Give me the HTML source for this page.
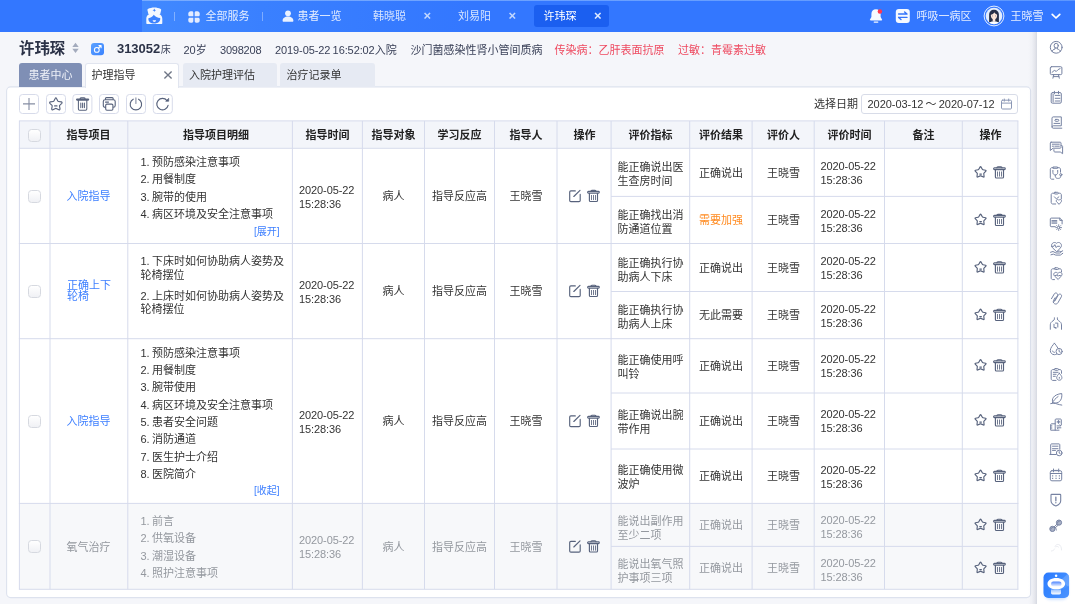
<!DOCTYPE html>
<html lang="zh-CN"><head><meta charset="utf-8"><title>护理指导</title>
<style>
*{box-sizing:border-box;margin:0;padding:0}
html,body{width:1075px;height:607px;overflow:hidden;background:#f5f6fa;font-family:"Liberation Sans","Noto Sans CJK SC",sans-serif;font-size:11px;color:#333;line-height:14px}
.a{position:absolute}
.t{position:absolute;white-space:nowrap}
.c{position:absolute;display:flex;align-items:center;justify-content:center;text-align:center}
.l{position:absolute;display:flex;align-items:center;justify-content:flex-start;text-align:left}
svg{position:absolute;overflow:visible}
.ic{fill:none;stroke:#57627c;stroke-width:1;stroke-linecap:round;stroke-linejoin:round}
.sb{fill:none;stroke:#7682a2;stroke-width:1;stroke-linecap:round;stroke-linejoin:round}
.w{color:#fff}
.hd{font-weight:bold;color:#222}
.bl{color:#3d7fff}
.gr{color:#94989f}
.cb{position:absolute;width:13px;height:13px;border:1px solid #d6d9e0;border-radius:3.5px;background:linear-gradient(#fff,#f0f1f5)}
.vl{position:absolute;width:1px;background:#d9deed}
.hl{position:absolute;height:1px;background:#d9deed}
.tb{position:absolute;width:19px;height:19px;top:95px;border:1px solid #d8dce8;border-radius:3px;background:#fff}
.it{position:absolute;left:140.5px;white-space:nowrap;line-height:14px;word-spacing:-.8px}
</style></head><body><div id="root" style="position:absolute;left:0;top:0;width:1075px;height:607px;will-change:transform">

<div class="a" style="left:0;top:0;width:1075px;height:32px;background:#3377ff"></div>
<div class="a" style="left:142px;top:0;width:933px;height:32px;background:linear-gradient(90deg,#4189ff 0,#3a80ff 120px,#3377ff 330px)"></div>
<div class="a" style="left:142px;top:0;width:933px;height:1px;background:linear-gradient(90deg,#79acff 0,#6ea3ff 300px,#5d97ff 100%)"></div>
<svg style="left:145px;top:7px" width="18" height="18" viewBox="0 0 18 18">
<path d="M2.9 1.9C4.8.900 7 .400 9.3.400s4.5.500 6.4 1.5c.400.2.600.6.500 1l-1 4H3.4L2.4 2.9c-.100-.400.1-.800.5-1z" fill="#f4f8ff"/>
<path d="M9.3 5.7c-4.7 0-8 2.4-8 6v4.5c0 .400.3.700.7.700h14.6c.400 0 .700-.300.7-.700v-4.5c0-3.6-3.3-6-8-6z" fill="#f4f8ff"/>
<path d="M3.4 11.2C5.7 10.8 7.8 9.6 8.8 7.7c1.3 1.9 3.7 3 6.4 3.4.500 3.3-2.2 5.5-5.9 5.5s-6.3-2.2-5.9-5.4z" fill="#3c82ff"/>
<path d="M7.7 13.3h3.3c0 1-.700 1.6-1.65 1.6s-1.65-.600-1.65-1.6z" fill="#f4f8ff"/>
<path d="M9.3 1.5l.550 1.25 1.25.550-1.25.550-.550 1.25-.550-1.25-1.25-.550 1.25-.550z" fill="#3c82ff"/>
</svg>
<div class="a" style="left:174px;top:12px;width:1px;height:9px;background:rgba(255,255,255,.35)"></div>
<svg style="left:188px;top:10.5px" width="12" height="12" viewBox="0 0 12 12" fill="#e3ecff">
<path d="M2.6.3h1.3c.8 0 1.4.6 1.4 1.4v3.6H1.9C1 5.3.3 4.6.3 3.7V2.6C.3 1.3 1.3.3 2.6.3z"/>
<path d="M9.4.3H8.1c-.8 0-1.4.6-1.4 1.4v3.6h3.4c.9 0 1.6-.7 1.6-1.6V2.6C11.7 1.3 10.7.3 9.4.3z"/>
<path d="M2.6 11.7h1.3c.8 0 1.4-.6 1.4-1.4V6.7H1.9C1 6.7.3 7.4.3 8.3v1.1c0 1.3 1 2.3 2.3 2.3z"/>
<path d="M9.4 11.7H8.1c-.8 0-1.4-.6-1.4-1.4V6.7h3.4c.9 0 1.6.7 1.6 1.6v1.1c0 1.3-1 2.3-2.3 2.3z"/>
</svg>
<div class="t" style="left:205.5px;top:9px;color:#e6eeff">全部服务</div>
<div class="a" style="left:262px;top:12px;width:1px;height:9px;background:rgba(255,255,255,.35)"></div>
<svg style="left:281.5px;top:10px" width="12" height="12" viewBox="0 0 12 12" fill="#eaf1ff">
<circle cx="6" cy="3.3" r="2.9"/><path d="M6 6.6c-3.2 0-5.4 1.8-5.4 4.1 0 .6.4 1 1 1h8.8c.6 0 1-.4 1-1 0-2.3-2.2-4.1-5.4-4.1z"/></svg>
<div class="t" style="left:297.5px;top:9px;color:#e6eeff">患者一览</div>
<div class="t" style="left:373px;top:9px;color:#d6e4ff">韩晓聪</div>
<div class="t" style="left:424px;top:8.5px;color:#c2d7ff;font-size:13px;font-weight:bold;margin-left:-.5px">×</div>
<div class="t" style="left:458px;top:9px;color:#d6e4ff">刘易阳</div>
<div class="t" style="left:509px;top:8.5px;color:#c2d7ff;font-size:13px;font-weight:bold;margin-left:-.5px">×</div>
<div class="a" style="left:534px;top:5px;width:75px;height:21.5px;background:#1b5ff0;border-radius:3px"></div>
<div class="t w" style="left:543.5px;top:9px">许玮琛</div>
<div class="t" style="left:594.5px;top:8.5px;color:#dfeaff;font-size:13px;font-weight:bold;margin-left:-.5px">×</div>
<svg style="left:869px;top:8px" width="14" height="15" viewBox="0 0 14 15"><g transform="translate(0,0.5)">
<path d="M7 .7c-2.8 0-4.6 2.1-4.6 4.7v3.2L1 11.1c-.3.5 0 .9.5.9h11c.5 0 .8-.4.5-.9l-1.4-2.5V5.4C11.6 2.8 9.8.7 7 .7z" fill="#f6f9ff"/>
<rect x="4.6" y="12.9" width="4.8" height="1.3" rx=".65" fill="#f6f9ff"/>
<circle cx="10.9" cy="3.1" r="2.25" fill="#ff3850"/></g></svg>
<svg style="left:895px;top:9px" width="14" height="14" viewBox="0 0 14 14"><g transform="translate(0.8,0)">
<rect x="0" y="0" width="14" height="14" rx="3" fill="#f6f9ff"/>
<path d="M2.8 5h8.4M8.8 2.9l2.4 2.1M11.2 8.4H2.8M5.2 10.5L2.8 8.4" fill="none" stroke="#3474fa" stroke-width="1.35" stroke-linecap="round" stroke-linejoin="round"/></g></svg>
<div class="t" style="left:916.5px;top:9px;color:#e6eeff">呼吸一病区</div>
<svg style="left:983px;top:5px" width="21" height="21" viewBox="0 0 21 21"><g transform="translate(0.5,0.5)">
<defs><clipPath id="av"><circle cx="10.5" cy="10.5" r="8.3"/></clipPath></defs>
<circle cx="10.5" cy="10.5" r="9.9" fill="none" stroke="#f4f8ff" stroke-width=".9"/>
<circle cx="10.5" cy="10.5" r="8.3" fill="#e2edff"/>
<g clip-path="url(#av)">
<path d="M5.6 17V9.3c0-3 2.1-5 4.9-5s4.9 2 4.9 5V17z" fill="#27304a"/>
<ellipse cx="10.5" cy="10.1" rx="3.1" ry="3.6" fill="#fde6da"/>
<path d="M7.2 9.2c1.7-.3 3-1.2 3.6-2.5.7 1.3 1.8 2.1 3 2.5V6.5l-3-1.7-3.6 1.7z" fill="#27304a"/>
<path d="M4 21c0-3.3 2.8-5.2 6.5-5.2S17 17.7 17 21z" fill="#fff"/>
<path d="M9.2 13.3h2.6v2.3l-1.3 1.2-1.3-1.2z" fill="#fde6da"/>
<circle cx="9.2" cy="10.4" r=".45" fill="#27304a"/><circle cx="11.8" cy="10.4" r=".45" fill="#27304a"/>
</g></g></svg>
<div class="t" style="left:1010.5px;top:9px;color:#e6eeff">王晓雪</div>
<svg style="left:1051px;top:13px" width="10" height="7" viewBox="0 0 10 7"><path d="M1.2 1.3L5 5l3.8-3.7" fill="none" stroke="#fff" stroke-width="1.7" stroke-linecap="round" stroke-linejoin="round"/></svg>
<div class="t" style="left:19px;top:37.5px;font-size:15.4px;line-height:22px;font-weight:bold;color:#2b3247">许玮琛</div>
<svg style="left:72px;top:42px" width="7" height="11" viewBox="0 0 7 11"><g transform="translate(0,0.8)"><path d="M3.5 0L6.7 4.3H.3z" fill="#a3abbd"/><path d="M3.5 10.2L6.7 5.9H.3z" fill="#a3abbd"/></g></svg>
<svg style="left:91px;top:43px" width="13" height="12" viewBox="0 0 13 12"><defs><linearGradient id="gd" x1="0" y1="0" x2="1" y2="1"><stop offset="0" stop-color="#5da2ff"/><stop offset="1" stop-color="#3a83ff"/></linearGradient></defs><rect width="13" height="12.2" rx="3" fill="url(#gd)"/>
<circle cx="5.8" cy="6.9" r="2.4" fill="none" stroke="#fff" stroke-width="1.05"/><path d="M7.6 5.1L10 2.7M7.9 2.6H10.1V4.8" fill="none" stroke="#fff" stroke-width="1.05" stroke-linecap="round" stroke-linejoin="round"/></svg>
<div class="t" style="left:117px;top:40px;font-size:13px;line-height:18px;font-weight:bold;color:#2b3247;letter-spacing:-.05px">313052<span style="font-size:10px;font-weight:normal;color:#3a4158;margin-left:.6px">床</span></div>
<div class="t" style="left:183.5px;top:42.7px;color:#3a4158">20岁</div>
<div class="t" style="left:220px;top:42.7px;color:#3a4158"><span style="letter-spacing:-.22px">3098208</span></div>
<div class="t" style="left:275px;top:42.7px;color:#3a4158"><span style="word-spacing:-.6px;letter-spacing:-.1px">2019-05-22 16:52:02</span>入院</div>
<div class="t" style="left:410.5px;top:42.7px;color:#3a4158">沙门菌感染性肾小管间质病</div>
<div class="t" style="left:554.5px;top:42.7px;color:#ee4a60">传染病：乙肝表面抗原</div>
<div class="t" style="left:678px;top:42.7px;color:#ee4a60">过敏：青霉素过敏</div>
<svg style="left:0;top:0" width="1075" height="607" viewBox="0 0 1075 607"><rect x="6.6" y="86.85" width="1024" height="510.75" rx="4" fill="#fff" stroke="#dde2ee" stroke-width="1.1"/></svg>
<div class="c w" style="left:19px;top:63px;width:63px;height:24px;background:#7f8fb5;border-radius:3px 3px 0 0;color:#eef1f8">患者中心</div>
<div class="a" style="left:85px;top:63px;width:94px;height:25px;background:#fff;border:1px solid #e1e5ef;border-bottom:none;border-radius:3px 3px 0 0"></div>
<div class="t" style="left:91.5px;top:68px;color:#333">护理指导</div>
<svg style="left:164px;top:71px" width="8" height="8" viewBox="0 0 8 8"><path d="M.4.4l7.2 7.2M7.6.400l-7.2 7.2" stroke="#6f7686" stroke-width="1.35" fill="none"/></svg>
<div class="l" style="left:182.5px;top:63px;width:94px;height:23.5px;background:#e6eaf3;border-radius:3px 3px 0 0;padding-left:6.5px;color:#333">入院护理评估</div>
<div class="l" style="left:280px;top:63px;width:94.5px;height:23.5px;background:#e6eaf3;border-radius:3px 3px 0 0;padding-left:6.5px;color:#333">治疗记录单</div>
<svg style="left:0;top:90px" width="200" height="28" viewBox="0 0 200 28">
<g transform="translate(19,4)"><rect x=".5" y=".5" width="19" height="19" rx="3" fill="#fff" stroke="#d7dbea"/><path d="M10 4.1v12M4 9.9h12" fill="none" stroke="#858da3" stroke-width="1.1" stroke-linecap="butt"/></g>
<g transform="translate(46,4)"><rect x=".5" y=".5" width="19" height="19" rx="3" fill="#fff" stroke="#d7dbea"/><path class="ic" d="M9.8 3.9c.3 0 .6.2.7.5l1.3 2.7c.1.2.3.4.6.4l2.9.4c.7.1 1 .9.5 1.4l-2.1 2c-.2.2-.3.4-.2.7l.5 2.9c.1.7-.6 1.2-1.2.9l-2.6-1.4c-.2-.1-.5-.1-.7 0l-2.6 1.4c-.6.3-1.3-.2-1.2-.9l.5-2.9c0-.3 0-.5-.2-.7l-2.1-2c-.5-.5-.2-1.3.5-1.4l2.9-.4c.3 0 .5-.2.6-.4l1.3-2.7c.1-.3.4-.5.7-.5zM8.6 11.9h2.4" style="stroke-width:1.15"/></g>
<g transform="translate(72.4,4)"><rect x=".5" y=".5" width="19" height="19" rx="3" fill="#fff" stroke="#d7dbea"/><path class="ic" d="M4.7 6.1h11c.4 0 .6-.3.6-.6s-.3-.6-.6-.6h-11c-.4 0-.6.3-.6.6s.3.6.6.6zM7.6 4.8c0-.6.5-1 1-1h3.2c.6 0 1 .4 1 1M6 6.3v8.7c0 .7.5 1.2 1.2 1.2h6c.7 0 1.2-.5 1.2-1.2V6.3M8.4 8.9v4.7M10.2 8.9v4.7M12 8.9v4.7" style="stroke-width:1.05"/></g>
<g transform="translate(99,4)"><rect x=".5" y=".5" width="19" height="19" rx="3" fill="#fff" stroke="#d7dbea"/><path class="ic" d="M6.4 5.6V4.7c0-.6.5-1.1 1.1-1.1h5.6c.6 0 1.1.5 1.1 1.1v.9M6.7 13.3H6.1c-1 0-1.8-.8-1.8-1.8V7.6c0-1 .8-1.8 1.8-1.8h8.3c1 0 1.8.8 1.8 1.8v3.9c0 1-.8 1.8-1.8 1.8h-.6M7.9 10.1h4.8c.7 0 1.2.5 1.2 1.2v3.7c0 .7-.5 1.2-1.2 1.2H7.9c-.7 0-1.2-.5-1.2-1.2v-3.7c0-.7.5-1.2 1.2-1.2zM6.5 8.1h3" style="stroke-width:1.1"/></g>
<g transform="translate(126,4)"><rect x=".5" y=".5" width="19" height="19" rx="3" fill="#fff" stroke="#d7dbea"/><path class="ic" d="M12.58 5.17A5.7 5.7 0 1 1 7.22 5.17" style="stroke-width:1.15"/><path d="M9.9 3.9v5.6" fill="none" stroke="#858da3" stroke-width="1.1" stroke-linecap="round"/></g>
<g transform="translate(152.8,4)"><rect x=".5" y=".5" width="19" height="19" rx="3" fill="#fff" stroke="#d7dbea"/><path class="ic" d="M14.19 6.59A5.7 5.7 0 1 0 15.28 11.29" style="stroke-width:1.15"/><path d="M15.9 4.3v3h-3z" fill="#525d78" stroke="#525d78" stroke-width=".6" stroke-linejoin="round"/></g>
</svg>
<div class="t" style="left:814px;top:96.5px;color:#333">选择日期</div>
<div class="a" style="left:861px;top:94px;width:157px;height:19.5px;border:1px solid #d8dce8;border-radius:3px;background:#fff"></div>
<div class="t" style="left:867.5px;top:96.5px;color:#333;word-spacing:-.8px;letter-spacing:-.04px">2020-03-12 ～ 2020-07-12</div>
<svg style="left:1001px;top:98px" width="11" height="11" viewBox="0 0 11 11"><g transform="translate(0,0.5)"><path d="M1.5 1.7h8c.5 0 1 .4 1 1v6.8c0 .5-.4 1-1 1h-8c-.5 0-1-.4-1-1V2.7c0-.5.4-1 1-1zM.5 4.6h10M3.3.5v2.2M7.7.5v2.2" fill="none" stroke="#8b97b5" stroke-width="1" stroke-linecap="round"/></g></svg>
<svg style="left:0;top:0" width="1075" height="607" viewBox="0 0 1075 607"><rect x="19.4" y="120.9" width="998.5" height="27.400000000000006" fill="#f3f5fa"/><rect x="19.4" y="503.4" width="998.5" height="85.89999999999998" fill="#f7f8fa"/><g stroke="#d6dbec" stroke-width="1" fill="none"><path d="M18.9 120.9H1018.4"/><path d="M18.9 148.3H1018.4"/><path d="M18.9 243.5H1018.4"/><path d="M18.9 338.7H1018.4"/><path d="M18.9 503.4H1018.4"/><path d="M18.9 589.3H1018.4"/><path d="M611.1 196.4H1017.9"/><path d="M611.1 291.5H1017.9"/><path d="M611.1 393H1017.9"/><path d="M611.1 449H1017.9"/><path d="M611.1 546.4H1017.9"/><path d="M19.4 120.9V589.3"/><path d="M50 120.9V589.3"/><path d="M127.8 120.9V589.3"/><path d="M292.4 120.9V589.3"/><path d="M362.4 120.9V589.3"/><path d="M424.5 120.9V589.3"/><path d="M494.5 120.9V589.3"/><path d="M557 120.9V589.3"/><path d="M611.1 120.9V589.3"/><path d="M689.7 120.9V589.3"/><path d="M752.1 120.9V589.3"/><path d="M814.2 120.9V589.3"/><path d="M884.5 120.9V589.3"/><path d="M962.3 120.9V589.3"/><path d="M1017.9 120.9V589.3"/></g></svg>
<div class="c hd" style="left:50px;top:122px;width:77px;height:26px">指导项目</div>
<div class="c hd" style="left:134px;top:122px;width:164px;height:26px">指导项目明细</div>
<div class="c hd" style="left:293px;top:122px;width:69px;height:26px">指导时间</div>
<div class="c hd" style="left:363px;top:122px;width:61px;height:26px">指导对象</div>
<div class="c hd" style="left:425px;top:122px;width:69px;height:26px">学习反应</div>
<div class="c hd" style="left:495px;top:122px;width:62px;height:26px">指导人</div>
<div class="c hd" style="left:558px;top:122px;width:53px;height:26px">操作</div>
<div class="c hd" style="left:612px;top:122px;width:77px;height:26px">评价指标</div>
<div class="c hd" style="left:690px;top:122px;width:62px;height:26px">评价结果</div>
<div class="c hd" style="left:753px;top:122px;width:61px;height:26px">评价人</div>
<div class="c hd" style="left:815px;top:122px;width:69px;height:26px">评价时间</div>
<div class="c hd" style="left:885px;top:122px;width:77px;height:26px">备注</div>
<div class="c hd" style="left:963px;top:122px;width:55px;height:26px">操作</div>
<div class="cb" style="left:28px;top:128.5px"></div>
<div class="cb" style="left:28px;top:189.5px"></div>
<div class="c bl" style="left:50px;top:149px;width:77px;height:94px">入院指导</div>
<div class="it" style="top:155px">1. 预防感染注意事项</div>
<div class="it" style="top:172.3px">2. 用餐制度</div>
<div class="it" style="top:189.7px">3. 腕带的使用</div>
<div class="it" style="top:207px">4. 病区环境及安全注意事项</div>
<div class="t bl" style="left:254px;top:224.5px;font-size:10px">[展开]</div>
<div class="l" style="left:299px;top:149.7px;width:62px;height:94px;letter-spacing:-.1px">2020-05-22<br>15:28:36</div>
<div class="c" style="left:363px;top:149px;width:61px;height:94px">病人</div>
<div class="c" style="left:425px;top:149px;width:69px;height:94px">指导反应高</div>
<div class="c" style="left:495px;top:149px;width:62px;height:94px">王晓雪</div>
<svg style="left:568px;top:188px" width="14" height="14" viewBox="0 0 14 14"><g transform="translate(0.5,0.8)"><path class="ic" d="M6.8 2.1H2.4c-.7 0-1.2.5-1.2 1.2v8.3c0 .7.5 1.2 1.2 1.2h8.1c.7 0 1.2-.5 1.2-1.2V5.6M5.3 7.7L11.5 1.5" style="stroke-width:1.15"/></g></svg>
<svg style="left:586px;top:188px" width="14" height="14" viewBox="0 0 14 14"><g transform="translate(0.5,0.8)"><rect class="ic" x="1.1" y="2.6" width="11.7" height="1.7" rx=".85" style="stroke-width:1.1"/><path class="ic" d="M4.4 2.5c0-.6.5-1 1-1h3.1c.6 0 1 .4 1 1M2.9 4.5v7.1c0 .6.5 1.1 1.1 1.1h5.9c.6 0 1.1-.5 1.1-1.1V4.5" style="stroke-width:1.15"/><path class="ic" d="M5 6.6v4.3M7 6.6v4.3M9 6.6v4.3" style="stroke-width:.85"/></g></svg>
<div class="l" style="left:617.5px;top:150.5px;width:72px;height:47px;line-height:14px">能正确说出医<br>生查房时间</div>
<div class="c" style="left:690px;top:149px;width:62px;height:47px"><span>正确说出</span></div>
<div class="c" style="left:753px;top:149px;width:61px;height:47px">王晓雪</div>
<div class="l" style="left:820.5px;top:149.7px;width:62px;height:47px;letter-spacing:-.1px">2020-05-22<br>15:28:36</div>
<svg style="left:973px;top:165px" width="14" height="14" viewBox="0 0 14 14"><g transform="translate(0.5,0.3)"><path class="ic" d="M6.66 1.59Q7.05 0.9 7.44 1.59L8.82 4Q9.02 4.34 9.41 4.42L12.12 4.99Q12.9 5.15 12.37 5.74L10.5 7.79Q10.24 8.09 10.28 8.48L10.58 11.24Q10.66 12.03 9.94 11.7L7.41 10.56Q7.05 10.4 6.69 10.56L4.16 11.7Q3.44 12.03 3.52 11.24L3.82 8.48Q3.86 8.09 3.6 7.79L1.73 5.74Q1.2 5.15 1.98 4.99L4.69 4.42Q5.08 4.34 5.28 4Z M6.3 8.8h1.6" style="stroke-width:1.15"/></g></svg>
<svg style="left:992px;top:165px" width="14" height="14" viewBox="0 0 14 14"><g transform="translate(0.5,0.3)"><rect class="ic" x="1.1" y="2.6" width="11.7" height="1.7" rx=".85" style="stroke-width:1.1"/><path class="ic" d="M4.4 2.5c0-.6.5-1 1-1h3.1c.6 0 1 .4 1 1M2.9 4.5v7.1c0 .6.5 1.1 1.1 1.1h5.9c.6 0 1.1-.5 1.1-1.1V4.5" style="stroke-width:1.15"/><path class="ic" d="M5 6.6v4.3M7 6.6v4.3M9 6.6v4.3" style="stroke-width:.85"/></g></svg>
<div class="l" style="left:617.5px;top:199px;width:72px;height:46px;line-height:14px">能正确找出消<br>防通道位置</div>
<div class="c" style="left:690px;top:197px;width:62px;height:46px"><span style="color:#ff8a1f">需要加强</span></div>
<div class="c" style="left:753px;top:197px;width:61px;height:46px">王晓雪</div>
<div class="l" style="left:820.5px;top:197.7px;width:62px;height:46px;letter-spacing:-.1px">2020-05-22<br>15:28:36</div>
<svg style="left:973px;top:212px" width="14" height="14" viewBox="0 0 14 14"><g transform="translate(0.5,0.8)"><path class="ic" d="M6.66 1.59Q7.05 0.9 7.44 1.59L8.82 4Q9.02 4.34 9.41 4.42L12.12 4.99Q12.9 5.15 12.37 5.74L10.5 7.79Q10.24 8.09 10.28 8.48L10.58 11.24Q10.66 12.03 9.94 11.7L7.41 10.56Q7.05 10.4 6.69 10.56L4.16 11.7Q3.44 12.03 3.52 11.24L3.82 8.48Q3.86 8.09 3.6 7.79L1.73 5.74Q1.2 5.15 1.98 4.99L4.69 4.42Q5.08 4.34 5.28 4Z M6.3 8.8h1.6" style="stroke-width:1.15"/></g></svg>
<svg style="left:992px;top:212px" width="14" height="14" viewBox="0 0 14 14"><g transform="translate(0.5,0.8)"><rect class="ic" x="1.1" y="2.6" width="11.7" height="1.7" rx=".85" style="stroke-width:1.1"/><path class="ic" d="M4.4 2.5c0-.6.5-1 1-1h3.1c.6 0 1 .4 1 1M2.9 4.5v7.1c0 .6.5 1.1 1.1 1.1h5.9c.6 0 1.1-.5 1.1-1.1V4.5" style="stroke-width:1.15"/><path class="ic" d="M5 6.6v4.3M7 6.6v4.3M9 6.6v4.3" style="stroke-width:.85"/></g></svg>
<div class="cb" style="left:28px;top:284.5px"></div>
<div class="l bl" style="left:67px;top:244px;width:60px;height:94px;line-height:11px">正确上下<br>轮椅</div>
<div class="it" style="top:254px">1. 下床时如何协助病人姿势及</div>
<div class="it" style="top:267.5px">轮椅摆位</div>
<div class="it" style="top:288.5px">2. 上床时如何协助病人姿势及</div>
<div class="it" style="top:302px">轮椅摆位</div>
<div class="l" style="left:299px;top:244.7px;width:62px;height:94px;letter-spacing:-.1px">2020-05-22<br>15:28:36</div>
<div class="c" style="left:363px;top:244px;width:61px;height:94px">病人</div>
<div class="c" style="left:425px;top:244px;width:69px;height:94px">指导反应高</div>
<div class="c" style="left:495px;top:244px;width:62px;height:94px">王晓雪</div>
<svg style="left:568px;top:283px" width="14" height="14" viewBox="0 0 14 14"><g transform="translate(0.5,0.8)"><path class="ic" d="M6.8 2.1H2.4c-.7 0-1.2.5-1.2 1.2v8.3c0 .7.5 1.2 1.2 1.2h8.1c.7 0 1.2-.5 1.2-1.2V5.6M5.3 7.7L11.5 1.5" style="stroke-width:1.15"/></g></svg>
<svg style="left:586px;top:283px" width="14" height="14" viewBox="0 0 14 14"><g transform="translate(0.5,0.8)"><rect class="ic" x="1.1" y="2.6" width="11.7" height="1.7" rx=".85" style="stroke-width:1.1"/><path class="ic" d="M4.4 2.5c0-.6.5-1 1-1h3.1c.6 0 1 .4 1 1M2.9 4.5v7.1c0 .6.5 1.1 1.1 1.1h5.9c.6 0 1.1-.5 1.1-1.1V4.5" style="stroke-width:1.15"/><path class="ic" d="M5 6.6v4.3M7 6.6v4.3M9 6.6v4.3" style="stroke-width:.85"/></g></svg>
<div class="l" style="left:617.5px;top:246.2px;width:72px;height:47px;line-height:14px">能正确执行协<br>助病人下床</div>
<div class="c" style="left:690px;top:244px;width:62px;height:47px"><span>正确说出</span></div>
<div class="c" style="left:753px;top:244px;width:61px;height:47px">王晓雪</div>
<div class="l" style="left:820.5px;top:244.7px;width:62px;height:47px;letter-spacing:-.1px">2020-05-22<br>15:28:36</div>
<svg style="left:973px;top:260px" width="14" height="14" viewBox="0 0 14 14"><g transform="translate(0.5,0.3)"><path class="ic" d="M6.66 1.59Q7.05 0.9 7.44 1.59L8.82 4Q9.02 4.34 9.41 4.42L12.12 4.99Q12.9 5.15 12.37 5.74L10.5 7.79Q10.24 8.09 10.28 8.48L10.58 11.24Q10.66 12.03 9.94 11.7L7.41 10.56Q7.05 10.4 6.69 10.56L4.16 11.7Q3.44 12.03 3.52 11.24L3.82 8.48Q3.86 8.09 3.6 7.79L1.73 5.74Q1.2 5.15 1.98 4.99L4.69 4.42Q5.08 4.34 5.28 4Z M6.3 8.8h1.6" style="stroke-width:1.15"/></g></svg>
<svg style="left:992px;top:260px" width="14" height="14" viewBox="0 0 14 14"><g transform="translate(0.5,0.3)"><rect class="ic" x="1.1" y="2.6" width="11.7" height="1.7" rx=".85" style="stroke-width:1.1"/><path class="ic" d="M4.4 2.5c0-.6.5-1 1-1h3.1c.6 0 1 .4 1 1M2.9 4.5v7.1c0 .6.5 1.1 1.1 1.1h5.9c.6 0 1.1-.5 1.1-1.1V4.5" style="stroke-width:1.15"/><path class="ic" d="M5 6.6v4.3M7 6.6v4.3M9 6.6v4.3" style="stroke-width:.85"/></g></svg>
<div class="l" style="left:617.5px;top:294.2px;width:72px;height:46px;line-height:14px">能正确执行协<br>助病人上床</div>
<div class="c" style="left:690px;top:292px;width:62px;height:46px"><span>无此需要</span></div>
<div class="c" style="left:753px;top:292px;width:61px;height:46px">王晓雪</div>
<div class="l" style="left:820.5px;top:292.7px;width:62px;height:46px;letter-spacing:-.1px">2020-05-22<br>15:28:36</div>
<svg style="left:973px;top:307px" width="14" height="14" viewBox="0 0 14 14"><g transform="translate(0.5,0.8)"><path class="ic" d="M6.66 1.59Q7.05 0.9 7.44 1.59L8.82 4Q9.02 4.34 9.41 4.42L12.12 4.99Q12.9 5.15 12.37 5.74L10.5 7.79Q10.24 8.09 10.28 8.48L10.58 11.24Q10.66 12.03 9.94 11.7L7.41 10.56Q7.05 10.4 6.69 10.56L4.16 11.7Q3.44 12.03 3.52 11.24L3.82 8.48Q3.86 8.09 3.6 7.79L1.73 5.74Q1.2 5.15 1.98 4.99L4.69 4.42Q5.08 4.34 5.28 4Z M6.3 8.8h1.6" style="stroke-width:1.15"/></g></svg>
<svg style="left:992px;top:307px" width="14" height="14" viewBox="0 0 14 14"><g transform="translate(0.5,0.8)"><rect class="ic" x="1.1" y="2.6" width="11.7" height="1.7" rx=".85" style="stroke-width:1.1"/><path class="ic" d="M4.4 2.5c0-.6.5-1 1-1h3.1c.6 0 1 .4 1 1M2.9 4.5v7.1c0 .6.5 1.1 1.1 1.1h5.9c.6 0 1.1-.5 1.1-1.1V4.5" style="stroke-width:1.15"/><path class="ic" d="M5 6.6v4.3M7 6.6v4.3M9 6.6v4.3" style="stroke-width:.85"/></g></svg>
<div class="cb" style="left:28px;top:414.5px"></div>
<div class="c bl" style="left:50px;top:339px;width:77px;height:164px">入院指导</div>
<div class="it" style="top:345.7px">1. 预防感染注意事项</div>
<div class="it" style="top:363px">2. 用餐制度</div>
<div class="it" style="top:380.3px">3. 腕带使用</div>
<div class="it" style="top:397.6px">4. 病区环境及安全注意事项</div>
<div class="it" style="top:415.2px">5. 患者安全问题</div>
<div class="it" style="top:432.2px">6. 消防通道</div>
<div class="it" style="top:449.5px">7. 医生护士介绍</div>
<div class="it" style="top:466.8px">8. 医院简介</div>
<div class="t bl" style="left:254px;top:483.5px;font-size:10px">[收起]</div>
<div class="l" style="left:299px;top:339.7px;width:62px;height:164px;letter-spacing:-.1px">2020-05-22<br>15:28:36</div>
<div class="c" style="left:363px;top:339px;width:61px;height:164px">病人</div>
<div class="c" style="left:425px;top:339px;width:69px;height:164px">指导反应高</div>
<div class="c" style="left:495px;top:339px;width:62px;height:164px">王晓雪</div>
<svg style="left:568px;top:413px" width="14" height="14" viewBox="0 0 14 14"><g transform="translate(0.5,0.8)"><path class="ic" d="M6.8 2.1H2.4c-.7 0-1.2.5-1.2 1.2v8.3c0 .7.5 1.2 1.2 1.2h8.1c.7 0 1.2-.5 1.2-1.2V5.6M5.3 7.7L11.5 1.5" style="stroke-width:1.15"/></g></svg>
<svg style="left:586px;top:413px" width="14" height="14" viewBox="0 0 14 14"><g transform="translate(0.5,0.8)"><rect class="ic" x="1.1" y="2.6" width="11.7" height="1.7" rx=".85" style="stroke-width:1.1"/><path class="ic" d="M4.4 2.5c0-.6.5-1 1-1h3.1c.6 0 1 .4 1 1M2.9 4.5v7.1c0 .6.5 1.1 1.1 1.1h5.9c.6 0 1.1-.5 1.1-1.1V4.5" style="stroke-width:1.15"/><path class="ic" d="M5 6.6v4.3M7 6.6v4.3M9 6.6v4.3" style="stroke-width:.85"/></g></svg>
<div class="l" style="left:617.5px;top:340.5px;width:72px;height:53px;line-height:14px">能正确使用呼<br>叫铃</div>
<div class="c" style="left:690px;top:339px;width:62px;height:53px"><span>正确说出</span></div>
<div class="c" style="left:753px;top:339px;width:61px;height:53px">王晓雪</div>
<div class="l" style="left:820.5px;top:339.7px;width:62px;height:53px;letter-spacing:-.1px">2020-05-22<br>15:28:36</div>
<svg style="left:973px;top:358px" width="14" height="14" viewBox="0 0 14 14"><g transform="translate(0.5,0.3)"><path class="ic" d="M6.66 1.59Q7.05 0.9 7.44 1.59L8.82 4Q9.02 4.34 9.41 4.42L12.12 4.99Q12.9 5.15 12.37 5.74L10.5 7.79Q10.24 8.09 10.28 8.48L10.58 11.24Q10.66 12.03 9.94 11.7L7.41 10.56Q7.05 10.4 6.69 10.56L4.16 11.7Q3.44 12.03 3.52 11.24L3.82 8.48Q3.86 8.09 3.6 7.79L1.73 5.74Q1.2 5.15 1.98 4.99L4.69 4.42Q5.08 4.34 5.28 4Z M6.3 8.8h1.6" style="stroke-width:1.15"/></g></svg>
<svg style="left:992px;top:358px" width="14" height="14" viewBox="0 0 14 14"><g transform="translate(0.5,0.3)"><rect class="ic" x="1.1" y="2.6" width="11.7" height="1.7" rx=".85" style="stroke-width:1.1"/><path class="ic" d="M4.4 2.5c0-.6.5-1 1-1h3.1c.6 0 1 .4 1 1M2.9 4.5v7.1c0 .6.5 1.1 1.1 1.1h5.9c.6 0 1.1-.5 1.1-1.1V4.5" style="stroke-width:1.15"/><path class="ic" d="M5 6.6v4.3M7 6.6v4.3M9 6.6v4.3" style="stroke-width:.85"/></g></svg>
<div class="l" style="left:617.5px;top:394.2px;width:72px;height:55px;line-height:14px">能正确说出腕<br>带作用</div>
<div class="c" style="left:690px;top:393px;width:62px;height:55px"><span>正确说出</span></div>
<div class="c" style="left:753px;top:393px;width:61px;height:55px">王晓雪</div>
<div class="l" style="left:820.5px;top:393.7px;width:62px;height:55px;letter-spacing:-.1px">2020-05-22<br>15:28:36</div>
<svg style="left:973px;top:413px" width="14" height="14" viewBox="0 0 14 14"><g transform="translate(0.5,0.3)"><path class="ic" d="M6.66 1.59Q7.05 0.9 7.44 1.59L8.82 4Q9.02 4.34 9.41 4.42L12.12 4.99Q12.9 5.15 12.37 5.74L10.5 7.79Q10.24 8.09 10.28 8.48L10.58 11.24Q10.66 12.03 9.94 11.7L7.41 10.56Q7.05 10.4 6.69 10.56L4.16 11.7Q3.44 12.03 3.52 11.24L3.82 8.48Q3.86 8.09 3.6 7.79L1.73 5.74Q1.2 5.15 1.98 4.99L4.69 4.42Q5.08 4.34 5.28 4Z M6.3 8.8h1.6" style="stroke-width:1.15"/></g></svg>
<svg style="left:992px;top:413px" width="14" height="14" viewBox="0 0 14 14"><g transform="translate(0.5,0.3)"><rect class="ic" x="1.1" y="2.6" width="11.7" height="1.7" rx=".85" style="stroke-width:1.1"/><path class="ic" d="M4.4 2.5c0-.6.5-1 1-1h3.1c.6 0 1 .4 1 1M2.9 4.5v7.1c0 .6.5 1.1 1.1 1.1h5.9c.6 0 1.1-.5 1.1-1.1V4.5" style="stroke-width:1.15"/><path class="ic" d="M5 6.6v4.3M7 6.6v4.3M9 6.6v4.3" style="stroke-width:.85"/></g></svg>
<div class="l" style="left:617.5px;top:450px;width:72px;height:54px;line-height:14px">能正确使用微<br>波炉</div>
<div class="c" style="left:690px;top:449px;width:62px;height:54px"><span>正确说出</span></div>
<div class="c" style="left:753px;top:449px;width:61px;height:54px">王晓雪</div>
<div class="l" style="left:820.5px;top:449.7px;width:62px;height:54px;letter-spacing:-.1px">2020-05-22<br>15:28:36</div>
<svg style="left:973px;top:468px" width="14" height="14" viewBox="0 0 14 14"><g transform="translate(0.5,0.8)"><path class="ic" d="M6.66 1.59Q7.05 0.9 7.44 1.59L8.82 4Q9.02 4.34 9.41 4.42L12.12 4.99Q12.9 5.15 12.37 5.74L10.5 7.79Q10.24 8.09 10.28 8.48L10.58 11.24Q10.66 12.03 9.94 11.7L7.41 10.56Q7.05 10.4 6.69 10.56L4.16 11.7Q3.44 12.03 3.52 11.24L3.82 8.48Q3.86 8.09 3.6 7.79L1.73 5.74Q1.2 5.15 1.98 4.99L4.69 4.42Q5.08 4.34 5.28 4Z M6.3 8.8h1.6" style="stroke-width:1.15"/></g></svg>
<svg style="left:992px;top:468px" width="14" height="14" viewBox="0 0 14 14"><g transform="translate(0.5,0.8)"><rect class="ic" x="1.1" y="2.6" width="11.7" height="1.7" rx=".85" style="stroke-width:1.1"/><path class="ic" d="M4.4 2.5c0-.6.5-1 1-1h3.1c.6 0 1 .4 1 1M2.9 4.5v7.1c0 .6.5 1.1 1.1 1.1h5.9c.6 0 1.1-.5 1.1-1.1V4.5" style="stroke-width:1.15"/><path class="ic" d="M5 6.6v4.3M7 6.6v4.3M9 6.6v4.3" style="stroke-width:.85"/></g></svg>
<div class="cb" style="left:28px;top:540px"></div>
<div class="c gr" style="left:50px;top:504px;width:77px;height:85px">氧气治疗</div>
<div class="it gr" style="top:514px">1. 前言</div>
<div class="it gr" style="top:531.2px">2. 供氧设备</div>
<div class="it gr" style="top:548.5px">3. 潮湿设备</div>
<div class="it gr" style="top:565.8px">4. 照护注意事项</div>
<div class="l gr" style="left:299px;top:504.7px;width:62px;height:85px;letter-spacing:-.1px">2020-05-22<br>15:28:36</div>
<div class="c gr" style="left:363px;top:504px;width:61px;height:85px">病人</div>
<div class="c gr" style="left:425px;top:504px;width:69px;height:85px">指导反应高</div>
<div class="c gr" style="left:495px;top:504px;width:62px;height:85px">王晓雪</div>
<svg style="left:568px;top:539px" width="14" height="14" viewBox="0 0 14 14"><g transform="translate(0.5,0.3)"><path class="ic" d="M6.8 2.1H2.4c-.7 0-1.2.5-1.2 1.2v8.3c0 .7.5 1.2 1.2 1.2h8.1c.7 0 1.2-.5 1.2-1.2V5.6M5.3 7.7L11.5 1.5" style="stroke-width:1.15"/></g></svg>
<svg style="left:586px;top:539px" width="14" height="14" viewBox="0 0 14 14"><g transform="translate(0.5,0.3)"><rect class="ic" x="1.1" y="2.6" width="11.7" height="1.7" rx=".85" style="stroke-width:1.1"/><path class="ic" d="M4.4 2.5c0-.6.5-1 1-1h3.1c.6 0 1 .4 1 1M2.9 4.5v7.1c0 .6.5 1.1 1.1 1.1h5.9c.6 0 1.1-.5 1.1-1.1V4.5" style="stroke-width:1.15"/><path class="ic" d="M5 6.6v4.3M7 6.6v4.3M9 6.6v4.3" style="stroke-width:.85"/></g></svg>
<div class="l gr" style="left:617.5px;top:506.8px;width:72px;height:42px;line-height:14px">能说出副作用<br>至少二项</div>
<div class="c gr" style="left:690px;top:504px;width:62px;height:42px"><span>正确说出</span></div>
<div class="c gr" style="left:753px;top:504px;width:61px;height:42px">王晓雪</div>
<div class="l gr" style="left:820.5px;top:506.2px;width:62px;height:42px;letter-spacing:-.1px">2020-05-22<br>15:28:36</div>
<svg style="left:973px;top:517px" width="14" height="14" viewBox="0 0 14 14"><g transform="translate(0.5,0.8)"><path class="ic" d="M6.66 1.59Q7.05 0.9 7.44 1.59L8.82 4Q9.02 4.34 9.41 4.42L12.12 4.99Q12.9 5.15 12.37 5.74L10.5 7.79Q10.24 8.09 10.28 8.48L10.58 11.24Q10.66 12.03 9.94 11.7L7.41 10.56Q7.05 10.4 6.69 10.56L4.16 11.7Q3.44 12.03 3.52 11.24L3.82 8.48Q3.86 8.09 3.6 7.79L1.73 5.74Q1.2 5.15 1.98 4.99L4.69 4.42Q5.08 4.34 5.28 4Z M6.3 8.8h1.6" style="stroke-width:1.15"/></g></svg>
<svg style="left:992px;top:517px" width="14" height="14" viewBox="0 0 14 14"><g transform="translate(0.5,0.8)"><rect class="ic" x="1.1" y="2.6" width="11.7" height="1.7" rx=".85" style="stroke-width:1.1"/><path class="ic" d="M4.4 2.5c0-.6.5-1 1-1h3.1c.6 0 1 .4 1 1M2.9 4.5v7.1c0 .6.5 1.1 1.1 1.1h5.9c.6 0 1.1-.5 1.1-1.1V4.5" style="stroke-width:1.15"/><path class="ic" d="M5 6.6v4.3M7 6.6v4.3M9 6.6v4.3" style="stroke-width:.85"/></g></svg>
<div class="l gr" style="left:617.5px;top:550.2px;width:72px;height:42px;line-height:14px">能说出氧气照<br>护事项三项</div>
<div class="c gr" style="left:690px;top:547px;width:62px;height:42px"><span>正确说出</span></div>
<div class="c gr" style="left:753px;top:547px;width:61px;height:42px">王晓雪</div>
<div class="l gr" style="left:820.5px;top:549.2px;width:62px;height:42px;letter-spacing:-.1px">2020-05-22<br>15:28:36</div>
<svg style="left:973px;top:560px" width="14" height="14" viewBox="0 0 14 14"><g transform="translate(0.5,0.8)"><path class="ic" d="M6.66 1.59Q7.05 0.9 7.44 1.59L8.82 4Q9.02 4.34 9.41 4.42L12.12 4.99Q12.9 5.15 12.37 5.74L10.5 7.79Q10.24 8.09 10.28 8.48L10.58 11.24Q10.66 12.03 9.94 11.7L7.41 10.56Q7.05 10.4 6.69 10.56L4.16 11.7Q3.44 12.03 3.52 11.24L3.82 8.48Q3.86 8.09 3.6 7.79L1.73 5.74Q1.2 5.15 1.98 4.99L4.69 4.42Q5.08 4.34 5.28 4Z M6.3 8.8h1.6" style="stroke-width:1.15"/></g></svg>
<svg style="left:992px;top:560px" width="14" height="14" viewBox="0 0 14 14"><g transform="translate(0.5,0.8)"><rect class="ic" x="1.1" y="2.6" width="11.7" height="1.7" rx=".85" style="stroke-width:1.1"/><path class="ic" d="M4.4 2.5c0-.6.5-1 1-1h3.1c.6 0 1 .4 1 1M2.9 4.5v7.1c0 .6.5 1.1 1.1 1.1h5.9c.6 0 1.1-.5 1.1-1.1V4.5" style="stroke-width:1.15"/><path class="ic" d="M5 6.6v4.3M7 6.6v4.3M9 6.6v4.3" style="stroke-width:.85"/></g></svg>
<div class="a" style="left:1028px;top:32px;width:9px;height:575px;background:linear-gradient(90deg,rgba(90,100,125,0) 0,rgba(90,100,125,.03) 40%,rgba(90,100,125,.1) 75%,rgba(90,100,125,.2) 100%)"></div>
<div class="a" style="left:1037px;top:32px;width:38px;height:575px;background:#fff"></div>
<svg style="left:1049px;top:40px" width="14" height="14" viewBox="0 0 14 14"><g transform="translate(0.5,0.2)"><circle class="sb" cx="6.7" cy="7.1" r="5.9"/><ellipse class="sb" cx="6.7" cy="5.5" rx="2.1" ry="2.4"/><path class="sb" d="M2.5 11.2c.2-1.3 1.4-1.9 3.1-2.4v-1M10.9 11.2c-.2-1.3-1.4-1.9-3.1-2.4v-1"/></g></svg>
<svg style="left:1049px;top:65px" width="14" height="14" viewBox="0 0 14 14"><g transform="translate(0.5,0.4)"><rect class="sb" x=".8" y="1.3" width="11.6" height="7.9" rx="1.2"/><path class="sb" d="M2.5 7l2.3-2 2 1 1.8-1.8 2-1M4.3 9.3l-.9 3.5M8.9 9.3l.9 3.5M3.8 11.2h5.6"/></g></svg>
<svg style="left:1049px;top:90px" width="14" height="14" viewBox="0 0 14 14"><g transform="translate(0.5,0.6)"><rect class="sb" x="1.7" y="2" width="10.1" height="10.6" rx="1.3"/><path class="sb" d="M4.9.7v2.5M9 .7v2.5M3.6 3.6v7.8M5.7 4.8h4.7M5.7 7.7h4.7M5.7 10.4h4.7"/></g></svg>
<svg style="left:1049px;top:115px" width="14" height="14" viewBox="0 0 14 14"><g transform="translate(0.5,0.8)"><path class="sb" d="M2.5 11.2V2.3c0-.7.5-1.2 1.2-1.2h8.1v8.9H3.7c-.7 0-1.2.5-1.2 1.2s.5 1.2 1.2 1.2h8.6M4.5 7.6h5.7"/><rect class="sb" x="5.4" y="3.6" width="3.9" height="1.9" rx=".95"/></g></svg>
<svg style="left:1049px;top:141px" width="14" height="14" viewBox="0 0 14 14"><g transform="translate(0.5,0)"><path class="sb" d="M1.6 1.2h9.1c.5 0 .8.4.8.8v4.4c0 .5-.4.8-.8.8H3.6L.8 9.5V2c0-.5.4-.8.8-.8zM2.8 3.2h7M2.8 5.2h1.2M5.3 5.2h4.5M4.4 8.6v1.5c0 .5.4.9.9.9h5.5l2.3 1.7V5.4c0-.5-.4-.9-.9-.9h-.6"/></g></svg>
<svg style="left:1049px;top:166px" width="14" height="14" viewBox="0 0 14 14"><g transform="translate(0.5,0.2)"><path class="sb" d="M3.6 1.5H2.3c-.8 0-1.5.7-1.5 1.5v8.5c0 .8.7 1.5 1.5 1.5h2M8.2 1.5h1.3c.8 0 1.5.7 1.5 1.5v3M3.8.8h4.2v1.3H3.8zM3.4 4.2v2.2c0 1.3 1.1 2.4 2.4 2.4s2.4-1.1 2.4-2.4V4.2M5.8 8.8v1.2c0 1.2 1 2.2 2.2 2.2h1.1c1.2 0 2.2-1 2.2-2.2v-.3"/><circle class="sb" cx="11.3" cy="8.5" r="1.1"/></g></svg>
<svg style="left:1049px;top:191px" width="14" height="14" viewBox="0 0 14 14"><g transform="translate(0.5,0.4)"><path class="sb" d="M4.5 1.8H3.2c-.8 0-1.5.7-1.5 1.5v7.8c0 .8.7 1.5 1.5 1.5h3M9 1.8h1.3c.8 0 1.5.7 1.5 1.5v4.3M4.9 5.4l2 2.1 2.5-2.1M9.4 12.7L7.2 10.6c-.6-.6-.6-1.5 0-2.1.5-.5 1.4-.5 1.9 0l.3.3.3-.3c.5-.5 1.4-.5 1.9 0 .6.6.6 1.5 0 2.1z"/><rect class="sb" x="4.7" y=".9" width="4.1" height="1.7" rx=".85"/></g></svg>
<svg style="left:1049px;top:216px" width="14" height="14" viewBox="0 0 14 14"><g transform="translate(0.5,0.6)"><path class="sb" d="M5.8 10.1H1.6c-.4 0-.8-.3-.8-.8v-7c0-.4.3-.8.8-.8h8.7l2.3 2.3v3.5M10.3 1.5v2.3h2.3M2.4 4h4.9M2.4 5.3h4.9M2.4 6.6h4.9"/><circle class="sb" cx="9.2" cy="11" r="1.3"/><path class="sb" d="M11.3 11L12.1 11M10.68 12.48L11.25 13.05M9.2 13.1L9.2 13.9M7.72 12.48L7.15 13.05M7.1 11L6.3 11M7.72 9.52L7.15 8.95M9.2 8.9L9.2 8.1M10.68 9.52L11.25 8.95" style="stroke-width:.9"/></g></svg>
<svg style="left:1049px;top:241px" width="14" height="14" viewBox="0 0 14 14"><g transform="translate(0.5,0.8)"><path class="sb" d="M7 9.8L3 6c-1.3-1.3-1.3-3.3 0-4.5 1.1-1.1 2.9-1.1 4 0 1.1-1.1 2.9-1.1 4 0 1.3 1.2 1.3 3.2 0 4.5zM2 4.5h2.3l1-1.7 1.4 3 1-1.3H10M1 10.5l2.5-.8 3 1.5h3.8c.6 0 1-.4 1-.9s-.4-.9-1-.9H8M11.3 10l1.9-1M1.5 13l2.3-.7 2.5 1h4.5l2.5-1.8"/></g></svg>
<svg style="left:1049px;top:267px" width="14" height="14" viewBox="0 0 14 14"><g transform="translate(0.5,0)"><path class="sb" d="M4.8 1.8H3.2c-.8 0-1.5.7-1.5 1.5v7.8c0 .8.7 1.5 1.5 1.5h1.8M9.1 1.8h1.4c.8 0 1.5.7 1.5 1.5v1.7M8.4 12.2L4.9 8.9c-.9-.9-.9-2.2 0-3 .8-.8 2.1-.8 2.9 0l.6.5.6-.5c.8-.8 2.1-.8 2.9 0 .9.8.9 2.1 0 3zM5.6 8.5h1.4l.7-1.1.9 1.9.7-.8h1.6"/><rect class="sb" x="4.9" y=".8" width="4.1" height="1.7" rx=".85"/></g></svg>
<svg style="left:1049px;top:292px" width="14" height="14" viewBox="0 0 14 14"><g transform="translate(0.5,0.2)"><path class="sb" d="M2 6.5l2.8-4.8c.5-.9 1.6-1.2 2.4-.7.9.5 1.1 1.5.7 2.4l-4 7M5.5 8.5l3.3-5.7c.5-.9 1.6-1.2 2.4-.7.9.5 1.1 1.5.7 2.4l-3.5 6.1c-.7 1.2-2.2 1.6-3.4.9s-1.6-2.2-.9-3.4l1.5-2.6"/></g></svg>
<svg style="left:1049px;top:317px" width="14" height="14" viewBox="0 0 14 14"><g transform="translate(0.5,0.4)"><path class="sb" d="M4.9.4v1.1c0 .9-.5 1.5-1.3 1.9C1.9 4.3.8 5.6.8 7.5v4.4M7.9.4v1.1c0 .9.5 1.5 1.3 1.9 1.7.9 2.8 2.2 2.8 4.1v4.4M4.5 6.9v3.3h1.9M6 5.7h2.3v4M6.4 10.2v.9"/></g></svg>
<svg style="left:1049px;top:342px" width="14" height="14" viewBox="0 0 14 14"><g transform="translate(0.5,0.6)"><path class="sb" d="M4.9.6C3.2 2.8.8 5.2.8 8c0 2.3 1.8 4.1 4.1 4.1.9 0 1.7-.3 2.3-.7M4.9.6c1.1 1.4 2.4 2.8 3.3 4.5M3 8.4c.3.9 1 1.4 1.9 1.4"/><circle class="sb" cx="9.6" cy="8.9" r="3.1"/><path class="sb" d="M9.6 7.2v1.8l1.2.6"/></g></svg>
<svg style="left:1049px;top:367px" width="14" height="14" viewBox="0 0 14 14"><g transform="translate(0.5,0.8)"><path class="sb" d="M4.8 1.8H3.2c-.8 0-1.5.7-1.5 1.5v7.8c0 .8.7 1.5 1.5 1.5h3.3M9.1 1.8h1.4c.8 0 1.5.7 1.5 1.5v2.2M3.8 4.5h4.8M3.8 6.5h2.8M3.8 8.5h2M9.8 5.5c-1.1 1.4-2.6 2.8-2.6 4.3 0 1.5 1.1 2.6 2.6 2.6s2.6-1.1 2.6-2.6c0-1.5-1.5-2.9-2.6-4.3zM9.8 9.5v1"/><rect class="sb" x="4.9" y=".8" width="4.1" height="1.7" rx=".85"/></g></svg>
<svg style="left:1049px;top:393px" width="14" height="14" viewBox="0 0 14 14"><g transform="translate(0.5,0)"><path class="sb" d="M3.3 9.6C1.8 6.3 3.6 1.6 12.2.5c.8 5-1.6 9.7-6.6 9.5-.9 0-1.7-.2-2.3-.4zM2.6 10.2c1.5-2.7 3.4-4.9 6-6.7M1.2 10.6c2.2-.6 4.2-.4 6.2.3 1.6.6 3.3 1 4.9 1.2"/></g></svg>
<svg style="left:1049px;top:418px" width="14" height="14" viewBox="0 0 14 14"><g transform="translate(0.5,0.2)"><path class="sb" d="M5.7 12V1.6c0-.4.3-.8.8-.8h4.5c.4 0 .8.3.8.8v5.2M5.7 5.6H2c-.4 0-.8.3-.8.8V12h8.3M1.2 7.7h1.2M1.2 9.8h1.2M7.5 7.7h3.9l-1-1M11.4 9.6H7.5l1 1"/><path class="sb" d="M7.7 3.7h2.6M9 2.4v2.6" style="stroke-width:1.3"/></g></svg>
<svg style="left:1049px;top:443px" width="14" height="14" viewBox="0 0 14 14"><g transform="translate(0.5,0.4)"><path class="sb" d="M10.3 5.8V1.3c0-.4-.3-.8-.8-.8H2c-.4 0-.8.3-.8.8v9.8M.3 11.1h6.3M3 2.8h5.5M3 5.3h5.5M3 7h3"/><circle class="sb" cx="9.7" cy="9.6" r="2.8"/><path class="sb" d="M9.7 8.2v1.5l1 .5"/></g></svg>
<svg style="left:1049px;top:468px" width="14" height="14" viewBox="0 0 14 14"><g transform="translate(0.5,0.6)"><rect class="sb" x=".8" y="2.1" width="11.4" height="10.1" rx="1.6"/><path class="sb" d="M4 .4v2.8M9.2 .4v2.8M.8 4.9h11.4M5.3 1.8h2.6"/><path class="sb" d="M2.6 7.3h1.1M6 7.3h1.1M9.3 7.3h1.1M2.6 9.8h1.1M6 9.8h1.1M9.3 9.8h1.1" style="stroke-width:1.2;stroke-linecap:butt"/></g></svg>
<svg style="left:1049px;top:493px" width="14" height="14" viewBox="0 0 14 14"><g transform="translate(0.5,0.8)"><path class="sb" d="M2.2.6h8.3c.4 0 .7.3.7.7v5.6c0 2.5-1.9 4.1-4.85 5.3C3.4 11 1.5 9.4 1.5 6.9V1.3c0-.4.3-.7.7-.7z" style="stroke-width:1.1"/><path class="sb" d="M6.35 3.3v3.7M6.35 8.8v.2" style="stroke-width:1.3"/></g></svg>
<svg style="left:1049px;top:519px" width="14" height="14" viewBox="0 0 14 14"><g transform="translate(0.5,0)"><circle cx="2.9" cy="9.9" r="2.6" fill="#a9b1c6" stroke="#7682a2" stroke-width="1"/><circle cx="9.5" cy="3.6" r="2.6" fill="#a9b1c6" stroke="#7682a2" stroke-width="1"/><path class="sb" d="M4.5 8l3.2-3M5.8 8.8l2.8-2.6M1.5 9.9c.2-1 .9-1.5 1.8-1.5M8.1 3.6c.2-1 .9-1.5 1.8-1.5M5.8 8.5c.7.8 1 1.6 1 2.6"/></g></svg>
<div class="a" style="left:0;top:604px;width:1037px;height:3px;background:#fff"></div>
<svg style="left:1049px;top:541px;opacity:.16" width="14" height="14" viewBox="0 0 14 14"><g transform="translate(0.5,0)"><path class="sb" d="M2 10c1.5-.2 2.5-.8 3-2M5.5 5.5c.5-1.5 2-2.3 3.5-2 2 .5 3 2.5 3 5.5M6.5 5.8c.8-.6 2-.5 2.6.3"/></g></svg>
<svg style="left:1040px;top:569px" width="34" height="36" viewBox="0 0 34 36">
<defs><linearGradient id="rb" x1="0" y1="0" x2="1" y2=".9"><stop offset="0" stop-color="#2a79ff"/><stop offset=".55" stop-color="#3f8cff"/><stop offset="1" stop-color="#5a9dff"/></linearGradient>
<linearGradient id="rf" x1="0" y1="0" x2="0" y2="1"><stop offset="0" stop-color="#4d85ff"/><stop offset="1" stop-color="#f2f6ff"/></linearGradient>
<linearGradient id="rn" x1="0" y1="0" x2="0" y2="1"><stop offset="0" stop-color="#fff" stop-opacity=".5"/><stop offset="1" stop-color="#fff" stop-opacity=".98"/></linearGradient>
<clipPath id="rc"><rect x="3.5" y="3.5" width="25.6" height="25.4" rx="5"/></clipPath>
<filter id="rs" x="-30%" y="-30%" width="160%" height="170%"><feGaussianBlur stdDeviation="1.6"/></filter></defs>
<rect x="5" y="8" width="22.6" height="22.5" rx="5" fill="#5b9bff" opacity=".35" filter="url(#rs)"/>
<rect x="3.5" y="3.5" width="25.6" height="25.4" rx="5" fill="url(#rb)"/>
<g clip-path="url(#rc)"><path d="M29.1 3.5v14.5L20 12z" fill="#9cc4ff" opacity=".35"/><path d="M3.5 17.5c6 5 19 5 25.6-1v12.4H3.5z" fill="#2b7dff" opacity=".35"/></g>
<circle cx="16.1" cy="6.8" r="1.25" fill="#fff"/>
<path d="M7.5 14.7c0-3.2 3.9-5.6 8.8-5.6s8.8 2.4 8.8 5.6-3.9 5.6-8.8 5.6-8.8-2.4-8.8-5.6z" fill="#fff"/>
<rect x="11" y="12.5" width="10.6" height="5" rx="2.4" fill="url(#rf)"/>
<path d="M11 20.6h10v3.2c0 .9-.7 1.6-1.6 1.6h-6.8c-.9 0-1.6-.7-1.6-1.6z" fill="url(#rn)"/>
</svg>
</div></body></html>
